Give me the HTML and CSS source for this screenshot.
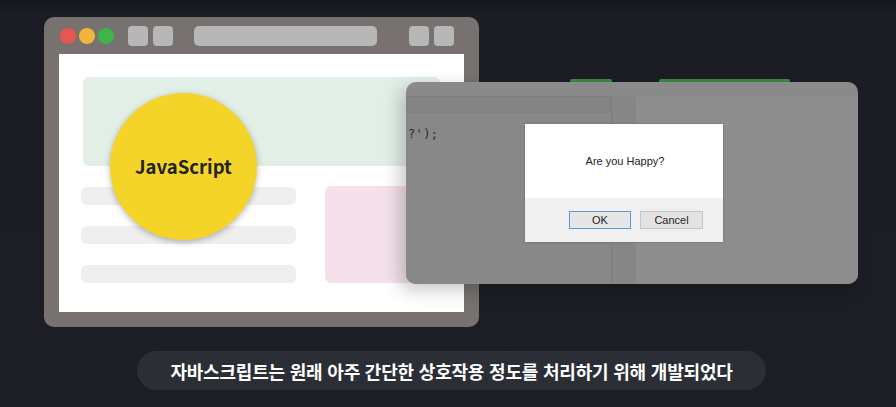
FILE: index.html
```html
<!DOCTYPE html>
<html lang="ko">
<head>
<meta charset="utf-8">
<title>JavaScript</title>
<link rel="stylesheet" href="styles.css">
</head>
<body>
<div class="stage">
  <div class="browser">
    <div class="toolbar">
      <span class="dot red"></span>
      <span class="dot yellow"></span>
      <span class="dot green"></span>
      <span class="sq sq-first"></span>
      <span class="sq"></span>
      <span class="address"></span>
      <span class="sq sq-right"></span>
      <span class="sq"></span>
    </div>
    <div class="content">
      <div class="hero"></div>
      <div class="lower">
        <div class="bars">
          <div class="bar"></div>
          <div class="bar"></div>
          <div class="bar"></div>
        </div>
        <div class="pink"></div>
      </div>
    </div>
  </div>

  <div class="badge">JavaScript</div>

  <div class="behind">
    <span class="strip strip-a"></span>
    <span class="strip strip-b"></span>
  </div>

  <div class="editor">
    <div class="panel-left">
      <div class="panel-head"></div>
      <div class="code">?');</div>
    </div>
    <div class="gutter"></div>
    <div class="panel-right"></div>

    <div class="dialog">
      <div class="dialog-body">Are you Happy?</div>
      <div class="dialog-foot">
        <span class="btn btn-ok">OK</span>
        <span class="btn">Cancel</span>
      </div>
    </div>
  </div>

  <div class="caption">자바스크립트는 원래 아주 간단한 상호작용 정도를 처리하기 위해 개발되었다</div>
</div>
</body>
</html>
```

FILE: styles.css
```css
* { box-sizing: border-box; }

html, body {
  margin: 0;
  padding: 0;
}

body {
  width: 896px;
  height: 407px;
  overflow: hidden;
  background: linear-gradient(#16171d 0px, #1c1d24 14px, #1d1e25 100%);
  font-family: "Noto Sans", "Liberation Sans", sans-serif;
}

.stage {
  position: relative;
  width: 896px;
  height: 407px;
  padding-top: 17px;
}

/* ---------- browser mockup ---------- */
.browser {
  margin-left: 44px;
  width: 435px;
  height: 310px;
  background: #77716f;
  border-radius: 10px;
  display: flex;
  flex-direction: column;
}

.toolbar {
  height: 37px;
  padding: 9px 24px 0 16px;
  display: flex;
  align-items: flex-start;
}

.dot {
  width: 16px;
  height: 16px;
  border-radius: 50%;
  margin-top: 2px;
  margin-right: 3px;
}
.red { background: #e9554f; }
.yellow { background: #f2b43a; }
.green { background: #3fb44b; margin-right: 0; }

.sq {
  width: 20px;
  height: 20px;
  border-radius: 4px;
  background: #b7b7b7;
  margin-left: 5px;
}
.sq-first { margin-left: 14px; }
.sq-right { margin-left: 32px; }

.address {
  width: 183px;
  height: 20px;
  border-radius: 5px;
  background: #b7b7b7;
  margin-left: 21px;
}

.content {
  margin: 0 15px;
  height: 258px;
  background: #ffffff;
  padding: 23px 0 0 24px;
}

.hero {
  width: 357px;
  height: 89px;
  background: #e2efe7;
  border-radius: 6px;
}

.lower {
  display: flex;
  margin-top: 20px;
  margin-left: -2px;
}

.bars {
  width: 215px;
  display: flex;
  flex-direction: column;
  gap: 21px;
  padding-top: 1px;
}

.bar {
  height: 18px;
  border-radius: 6px;
  background: #efefef;
}

.pink {
  margin-left: 29px;
  width: 120px;
  height: 97px;
  border-radius: 6px;
  background: #f4e1ec;
}

/* ---------- JavaScript badge ---------- */
.badge {
  position: absolute;
  left: 110px;
  top: 93px;
  width: 147px;
  height: 147px;
  border-radius: 50%;
  background: #f4d428;
  box-shadow: 0 2px 6px rgba(0, 0, 0, 0.28);
  display: flex;
  align-items: center;
  justify-content: center;
  font-family: "Noto Sans CJK KR", "Noto Sans", sans-serif;
  font-weight: 700;
  font-size: 18.5px;
  color: #222;
  padding-bottom: 2px;
}

/* ---------- window behind editor ---------- */
.behind {
  position: absolute;
  left: 560px;
  top: 79px;
  width: 240px;
  height: 6px;
}
.strip {
  position: absolute;
  top: 0;
  height: 5px;
  background: #3c8a3f;
  border-radius: 2px;
}
.strip-a { left: 10px; width: 42px; }
.strip-b { left: 99px; width: 131px; }

/* ---------- editor overlay ---------- */
.editor {
  position: absolute;
  left: 406px;
  top: 82px;
  width: 452px;
  height: 202px;
  border-radius: 10px;
  background: #8a8a8a;
  box-shadow: -6px 6px 18px rgba(0, 0, 0, 0.22);
  display: flex;
  padding-top: 14px;
  overflow: hidden;
}

.panel-left {
  width: 206px;
  border-top: 1px solid #7e7e7e;
  border-right: 1px solid #7c7c7c;
  border-top-right-radius: 3px;
  background: #888888;
  overflow: hidden;
}

.panel-head {
  height: 16px;
  background: #848484;
  border-bottom: 1px solid #828282;
}

.code {
  margin-top: 14px;
  padding-left: 2px;
  font-family: "DejaVu Sans Mono", "Liberation Mono", monospace;
  font-size: 12px;
  line-height: 14px;
  color: #2a2a2a;
  letter-spacing: 0.4px;
}

.gutter {
  width: 24px;
  background: #868686;
}

.panel-right {
  flex: 1;
  background: #8d8d8d;
  border-top-left-radius: 4px;
}

.dialog {
  position: absolute;
  left: 119px;
  top: 42px;
  width: 198px;
  height: 118px;
  background: #ffffff;
  box-shadow: 0 0 2px rgba(0, 0, 0, 0.25);
  display: flex;
  flex-direction: column;
  font-family: "Liberation Sans", Arial, sans-serif;
}

.dialog-body {
  height: 74px;
  display: flex;
  align-items: center;
  justify-content: center;
  font-size: 11px;
  color: #222;
  padding-left: 2px;
}

.dialog-foot {
  flex: 1;
  background: #f0f0f0;
  display: flex;
  align-items: center;
  justify-content: flex-end;
  gap: 9px;
  padding: 0 20px 0 0;
}

.btn {
  width: 63px;
  height: 18px;
  border: 1px solid #c6c6c6;
  background: #e3e3e3;
  font-size: 11px;
  color: #222;
  display: flex;
  align-items: center;
  justify-content: center;
}

.btn-ok {
  width: 62px;
  border-color: #5a9ad6;
  background: #e6e6e6;
}

/* ---------- caption ---------- */
.caption {
  margin: 24px 0 0 137px;
  width: 629px;
  height: 39px;
  border-radius: 20px;
  background: #2c2e35;
  color: #ffffff;
  font-family: "Noto Sans CJK KR", "Noto Sans", sans-serif;
  font-weight: 700;
  font-size: 18px;
  display: flex;
  align-items: center;
  justify-content: center;
  letter-spacing: -0.2px;
}
```
